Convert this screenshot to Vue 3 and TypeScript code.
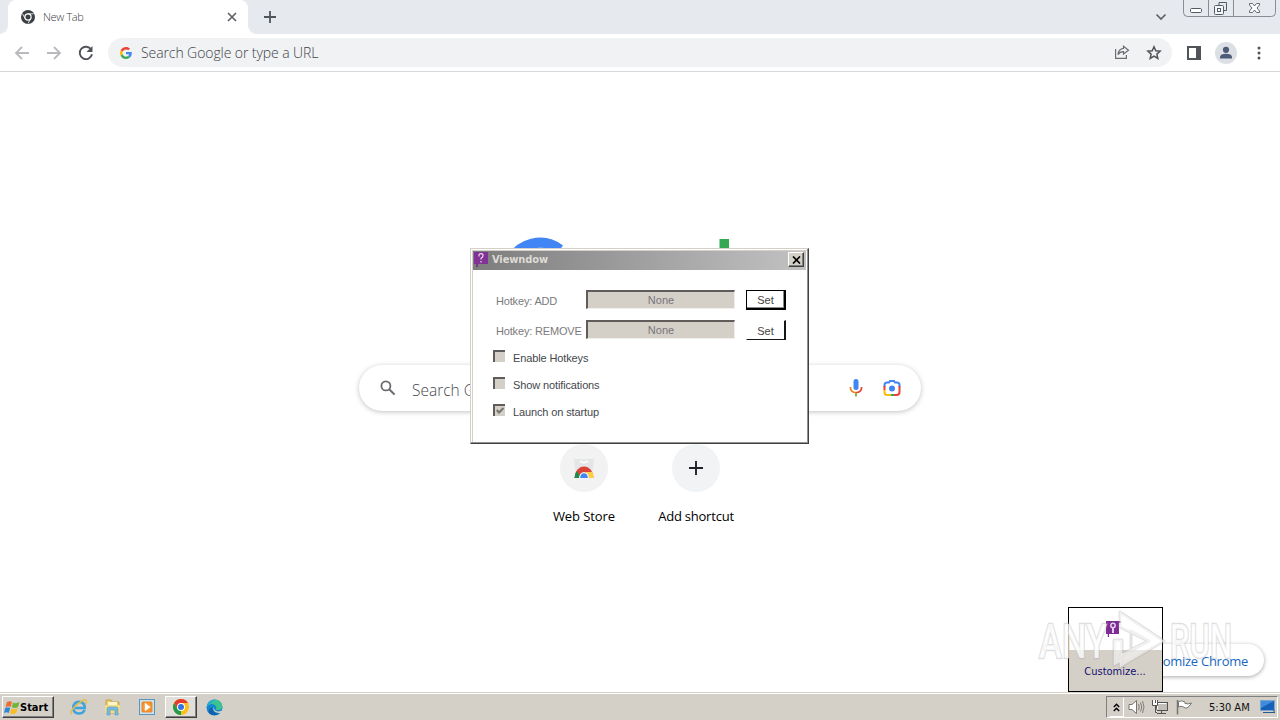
<script setup lang="ts">
interface HotkeyRow { label: string; value: string; focused: boolean }
interface Option { label: string; checked: boolean }

const hotkeys: HotkeyRow[] = [
  { label: 'Hotkey: ADD', value: 'None', focused: true },
  { label: 'Hotkey: REMOVE', value: 'None', focused: false },
]
const options: Option[] = [
  { label: 'Enable Hotkeys', checked: false },
  { label: 'Show notifications', checked: false },
  { label: 'Launch on startup', checked: true },
]
</script>

<template>
  <div class="desktop">
    <header class="tabstrip">
      <div class="tab">
        <svg class="tab-icon" width="14" height="14" viewBox="0 0 14 14">
          <circle cx="7" cy="7" r="7" fill="#3c4043" />
          <circle cx="7" cy="7" r="3.1" fill="#3c4043" stroke="#fff" stroke-width="1.2" />
          <path d="M7 3.8H12.600M4.2 8.6L1.400 3.700M9.8 8.6L7 13.400" stroke="#fff" stroke-width=".8" />
        </svg>
        <span class="tab-title">New Tab</span>
        <svg class="tab-close" width="10" height="10" viewBox="0 0 10 10"><path d="M1 1L9 9M9 1L1 9" stroke="#5f6368" stroke-width="1.7" /></svg>
      </div>
      <svg class="new-tab" width="12" height="12" viewBox="0 0 12 12"><path d="M6 0V12M0 6H12" stroke="#50555a" stroke-width="1.8" /></svg>
      <svg class="tab-search" width="12" height="8" viewBox="0 0 12 8"><path d="M1.5 1.5L6 6L10.5 1.5" fill="none" stroke="#5f6368" stroke-width="1.7" /></svg>
      <svg class="caption" width="94" height="18" viewBox="0 0 94 18">
        <path d="M.5 0V12.5Q.5 16.5 4.500 16.500H88.500Q92.500 16.500 92.500 12.500V0M25.500 0V16M50.500 0V16" fill="none" stroke="#888d94" />
        <rect x="7.500" y="8.500" width="11" height="4" rx="1.200" fill="#fff" stroke="#555b64" />
        <path d="M36 2.500H43.500V10.500H40.500" fill="none" stroke="#555b64" />
        <rect x="31.500" y="5.500" width="9" height="9" rx="1" fill="#f5f6f7" stroke="#555b64" />
        <rect x="34.500" y="8.500" width="3" height="3" fill="#fff" stroke="#555b64" />
        <path d="M36 5V2.500" stroke="#555b64" />
        <path d="M66.500 3.500H69.500L71.500 6L73.500 3.500H76.500V5L74 8L76.500 11V12.500H73.500L71.500 10L69.500 12.500H66.500V11L69 8L66.500 5Z" fill="#fff" stroke="#666b73" />
      </svg>
    </header>

    <nav class="toolbar">
      <svg width="16" height="14" viewBox="0 0 16 14" class="back"><path d="M15 7H2M8 1L2 7L8 13" fill="none" stroke="#b8babd" stroke-width="1.800" /></svg>
      <svg width="16" height="14" viewBox="0 0 16 14" class="forward"><path d="M1 7H14M8 1L14 7L8 13" fill="none" stroke="#b8babd" stroke-width="1.800" /></svg>
      <svg width="16" height="16" viewBox="0 0 16 16" class="reload"><path d="M13.200 4.600A6.200 6.200 0 1 0 14 9.300" fill="none" stroke="#505458" stroke-width="1.900" /><path d="M14.500 1V7H8.500Z" fill="#505458" /></svg>
      <div class="omnibox">
        <svg width="12" height="12" viewBox="0 0 48 48">
          <path fill="#EA4335" d="M24 9.500c3.500 0 6.700 1.200 9.200 3.600l6.900-6.900C35.900 2.400 30.500 0 24 0 14.600 0 6.500 5.400 2.600 13.200l8 6.200C12.400 13.700 17.700 9.500 24 9.500z" />
          <path fill="#4285F4" d="M47 24.500c0-1.600-.2-3.100-.4-4.500H24v9h12.900c-.6 3-2.200 5.500-4.800 7.200l7.700 6C44.400 38 47 31.800 47 24.500z" />
          <path fill="#FBBC05" d="M10.500 28.600c-1-2.900-1-6.200 0-9.200l-8-6.200c-3.400 6.800-3.400 14.800 0 21.600z" />
          <path fill="#34A853" d="M24 48c6.500 0 11.900-2.100 15.900-5.800l-7.700-6c-2.200 1.500-4.900 2.300-8.200 2.300-6.300 0-11.600-4.200-13.500-9.900l-8 6.200C6.500 42.600 14.600 48 24 48z" />
        </svg>
        <span class="omnibox-text">Search Google or type a URL</span>
        <svg class="share" width="16" height="15" viewBox="0 0 16 15" fill="none" stroke="#6b6f73" stroke-width="1.200"><path d="M1.600 4V13.400H12.400V10" /><path d="M9.500 1.200L14.500 5.200L9.500 9V6.700C7 6.700 5.300 7.500 4 9.600C4.300 6.200 6.200 3.800 9.500 3.400Z" /></svg>
        <svg class="star" width="16" height="15" viewBox="0 0 16 15"><path d="M8 1.800L9.800 5.800L14.100 6.200L10.900 9.100L11.800 13.400L8 11.100L4.200 13.400L5.100 9.100L1.900 6.200L6.200 5.800Z" fill="none" stroke="#505458" stroke-width="1.500" /></svg>
      </div>
      <svg class="panel-icon" width="14" height="14" viewBox="0 0 14 14"><path d="M0 0H14V14H0ZM2 2V12H9V2Z" fill="#505458" fill-rule="evenodd" /></svg>
      <svg class="avatar" width="22" height="22" viewBox="0 0 22 22"><circle cx="11" cy="11" r="11" fill="#dcdfe4" /><circle cx="11" cy="7.800" r="3.100" fill="#4d5a78" /><path d="M5 16.500V15Q5.500 11.800 11 11.800T17 15V16.500Z" fill="#4d5a78" /></svg>
      <svg class="more" width="4" height="14" viewBox="0 0 4 14" fill="#505458"><circle cx="2" cy="2" r="1.500" /><circle cx="2" cy="7" r="1.500" /><circle cx="2" cy="12" r="1.500" /></svg>
    </nav>

    <main class="page">
      <svg class="logo" width="272" height="92" viewBox="0 0 272 92">
        <path d="M56 13.500A33 33 0 1 0 69 40H36" fill="none" stroke="#4285f4" stroke-width="10" />
        <rect x="215.500" y="3" width="9.500" height="66" fill="#34a853" />
      </svg>
      <div class="searchbox">
        <svg width="16" height="16" viewBox="0 0 16 16"><circle cx="5.900" cy="5.900" r="4.500" fill="none" stroke="#66696d" stroke-width="1.800" /><path d="M9.200 9.200L14.600 14.600" stroke="#66696d" stroke-width="2" /></svg>
        <span class="search-text">Search Google or type a URL</span>
        <svg class="mic" width="14" height="18" viewBox="0 0 14 18"><rect x="4.500" y="0" width="5" height="11" rx="2.500" fill="#4285f4" /><path d="M1.300 8Q1.500 13.500 7 13.500" fill="none" stroke="#e58a1a" stroke-width="1.700" /><path d="M7 13.500Q12.500 13.500 12.700 8" fill="none" stroke="#ea4335" stroke-width="1.700" /><path d="M7 13.500V17.500" stroke="#8a9a38" stroke-width="1.700" /></svg>
        <svg width="18" height="18" viewBox="0 0 18 18" fill="none" stroke-width="2"><path d="M1.500 8V6Q1.500 3.500 4 3.500H6L7 2H11L12 3.500H14Q16.500 3.500 16.500 6V8" stroke="#4285f4" /><path d="M16.500 7V13Q16.500 16 13.500 16H11" stroke="#ea4335" /><path d="M11 16H7.500" stroke="#34a853" /><path d="M8 16H4Q1.500 16 1.500 13V11" stroke="#fbbc04" /><path d="M1.500 7V11" stroke="#ea4335" /><circle cx="9" cy="9.500" r="3" fill="#4285f4" /></svg>
      </div>
      <div class="shortcuts">
        <div class="shortcut">
          <div class="disc store">
            <svg width="24" height="24" viewBox="0 0 24 24"><path d="M2 3H22L20 21H4Z" fill="#e4e5e6" /><path d="M8 5Q12 8 16 5" fill="none" stroke="#fafafa" stroke-width="2" /><path d="M2.500 22A9.500 11.500 0 0 1 21.500 22Z" fill="#db4437" /><path d="M2.500 22Q2.500 18 5 15L9 22Z" fill="#168f4b" /><path d="M14 16H20.500Q22 19 21.500 22H14Z" fill="#ffcd40" /><path d="M7 22A5 6 0 0 1 17 22Z" fill="#f1f3f4" /><path d="M8.200 22A3.800 4.800 0 0 1 15.800 22Z" fill="#4285f4" /></svg>
          </div>
          <span class="web-label">Web Store</span>
        </div>
        <div class="shortcut">
          <div class="disc"><svg width="14" height="14" viewBox="0 0 14 14"><path d="M7 0V14M0 7H14" stroke="#202124" stroke-width="1.900" /></svg></div>
          <span class="add-label">Add shortcut</span>
        </div>
      </div>
      <button class="customize-chrome">Customize Chrome</button>
    </main>

    <section class="dialog">
      <div class="titlebar">
        <svg width="14" height="15" viewBox="0 0 14 15"><path d="M0 0H14V12H4V15H2V12H0Z" fill="#803295" /><path d="M5 4.500V3Q5 1.700 7 1.700T9 3.500T7 6.300V7.500M7 9V10.500" fill="none" stroke="#eadcf0" stroke-width="1.200" /></svg>
        <span class="window-title">Viewndow</span>
        <span class="close-button"><svg width="9" height="8" viewBox="0 0 9 8"><path d="M1 .5L8 7.500M8 .5L1 7.500" stroke="#000" stroke-width="1.700" /></svg></span>
      </div>
      <div class="dialog-body">
        <div v-for="row in hotkeys" :key="row.label" class="hotkey">
          <span class="hotkey-label">{{ row.label }}</span>
          <span class="hotkey-field">{{ row.value }}</span>
          <button class="set" :class="{ focused: row.focused }">Set</button>
        </div>
        <div class="options">
          <div v-for="option in options" :key="option.label" class="option">
            <span class="check"><svg v-if="option.checked" width="8" height="8" viewBox="0 0 8 8"><path d="M.7 3L3 5.500L7.500 1" fill="none" stroke="#77756f" stroke-width="2" /></svg></span>
            <span class="option-label">{{ option.label }}</span>
          </div>
        </div>
      </div>
    </section>

    <aside class="tray-popup">
      <div class="tray-icons"><svg width="15" height="17" viewBox="0 0 15 17"><path d="M0 1H15V3H13V14H3V17H1.800V14H0Z" fill="#7c2d94" /><circle cx="7" cy="5.500" r="2.200" fill="none" stroke="#e2cdea" stroke-width="1.500" /><path d="M7 8V13" stroke="#e2cdea" stroke-width="2" /></svg></div>
      <div class="tray-customize">Customize...</div>
    </aside>

    <svg class="watermark" width="204" height="66" viewBox="0 0 204 66">
      <g class="mark-text">
        <text x="4" y="51" textLength="68" lengthAdjust="spacingAndGlyphs">ANY</text>
        <text x="135" y="51" textLength="62" lengthAdjust="spacingAndGlyphs">RUN</text>
      </g>
      <g fill="none" stroke-linejoin="round">
        <path d="M79 33V58L87 54V33ZM85 5V20L113 34L85 48V60L129 34ZM96 24V44L114 34Z" stroke="#aaa" stroke-opacity=".35" stroke-width="3" />
        <path d="M79 33V58L87 54V33ZM85 5V20L113 34L85 48V60L129 34Z" fill="#fff" fill-opacity=".5" stroke="#fff" stroke-opacity=".35" />
      </g>
    </svg>

    <footer class="taskbar">
      <button class="start">
        <svg width="17" height="15" viewBox="0 0 17 15"><path d="M3 2Q6 .5 8 2L6.500 7Q4 5.500 1.500 7Z" fill="#ed6c2d" /><path d="M9 2.500Q12 4 15.500 2L14 7Q11 8.700 7.700 7.200Z" fill="#70b43b" /><path d="M1.200 8Q3.500 6.500 6.200 8L4.700 13Q2.500 11.500 0 13Z" fill="#2989d8" /><path d="M7.400 8.400Q10 10 13.700 8.200L12.200 13Q9 14.700 5.900 13.200Z" fill="#f7bd25" /></svg>
        <span>Start</span>
      </button>
      <svg class="ie" width="18" height="18" viewBox="0 0 18 18"><path d="M14.700 12Q13 15.500 9 15.500Q3.300 15.300 3.300 9.500Q3.500 4 9 3.700Q14.800 4 14.800 10H5" fill="none" stroke="#3fa4dd" stroke-width="2.500" /><path d="M2 16Q-1 14 6 7.500Q14 .5 16 2Q17.200 3 15.500 6" fill="none" stroke="#e8bd41" stroke-width="1.400" /></svg>
      <svg class="explorer" width="17" height="17" viewBox="0 0 17 17"><path d="M2 1H7L8 3H15V14H2Z" fill="#e9cc69" stroke="#c6a348" /><path d="M4 3H13V8H4Z" fill="#fff7c9" /><path d="M1 6H16V14H1Z" fill="#f3dc86" /><path d="M3 16V10Q3 8 5 8H12Q14 8 14 10V16H11V11H6V16Z" fill="#75b9df" stroke="#5b9ac1" stroke-width=".6" /></svg>
      <svg class="player" width="16" height="17" viewBox="0 0 16 17"><rect x=".5" y=".5" width="15" height="15" fill="#cae4f4" stroke="#5796bd" /><rect x="2.500" y="2.500" width="11" height="11" rx="1.500" fill="#f08a25" /><circle cx="8" cy="8" r="4.400" fill="#f59a38" /><path d="M5.800 3.800L11.500 8L5.800 12.200Z" fill="#fff" /></svg>
      <div class="task-active"><svg width="16" height="16" viewBox="0 0 16 16"><circle cx="8" cy="8" r="8" fill="#fbc116" /><path d="M1.070 4A8 8 0 0 1 14.930 4H8L4.500 10Z" fill="#e33b2e" /><path d="M1.070 4L4.540 10L8 11.500L8 16A8 8 0 0 1 1.070 4Z" fill="#219b4d" /><circle cx="8" cy="8" r="4" fill="#fff" /><circle cx="8" cy="8" r="3" fill="#3474e0" /></svg></div>
      <svg class="edge" width="17" height="17" viewBox="0 0 17 17"><circle cx="8.500" cy="8.500" r="8" fill="#1387d0" /><path d="M1 7Q3 .5 9 .5Q16 1 16.500 8Q16 11.500 11 11Q9 10.500 10.500 8.500Q9 4.500 5 5Q2 5.500 1 7Z" fill="#3dc38f" /><path d="M1 7Q3 .7 9 .6L5 5Q2 5.500 1 7Z" fill="#29afd2" /><path d="M6.500 8Q6 14 12.500 14.500Q8 18 3.500 14.500Q1 10.500 6.500 8Z" fill="#1260aa" /><path d="M7.500 8Q8 12 12 12.500Q15 12.300 17 11V13L15 15Q15 14 12.500 14Q6 13 7.500 8Z" fill="#d4d0c8" /></svg>
      <div class="systray">
        <span class="expand"><svg width="7" height="9" viewBox="0 0 7 9"><path d="M.8 4L3.500 1.300L6.200 4M.8 8L3.500 5.300L6.200 8" fill="none" stroke="#000" stroke-width="1.400" /></svg></span>
        <svg class="volume" width="17" height="16" viewBox="0 0 17 16"><path d="M1 5.500H4L8.500 1.500V14.500L4 10.500H1Z" fill="#fff" stroke="#77756f" /><path d="M10.500 5Q12 8 10.500 11M12.500 3.500Q15 8 12.500 12.500M14.500 2Q17.500 8 14.500 14" fill="none" stroke="#77756f" stroke-width=".9" /></svg>
        <svg class="network" width="17" height="16" viewBox="0 0 17 16"><rect x="4.500" y="3.500" width="11" height="8" fill="#c1beb7" stroke="#55534f" /><path d="M5.500 10.500V4.500H14.500" fill="none" stroke="#fff" /><path d="M5 14.500H14M9.500 12V14" stroke="#55534f" /><path d="M.5 1V6.500H5.500V1M3.500 6.500V13.500H5M3.500 1V4" fill="#fff" stroke="#55534f" /></svg>
        <svg class="flag" width="17" height="16" viewBox="0 0 17 16"><path d="M2.500 2.500Q6 1 9 3V4.500Q12 5.500 15.500 4Q13 8 11 9Q9 9.500 7.500 8Q5 6.500 2.500 8Z" fill="#fff" stroke="#77756f" /><path d="M1.500 1V15.500" stroke="#77756f" stroke-width="1.500" /></svg>
        <span class="clock">5:30 AM</span>
        <svg class="desktop-icon" width="16" height="14" viewBox="0 0 16 14"><rect x=".5" y=".5" width="14" height="10" fill="#1760b7" stroke="#7aa4d0" /><path d="M1 1H14L1 8Z" fill="#3f8bdc" /><path d="M3 12.500H15M14 10V13" stroke="#24588f" /></svg>
      </div>
    </footer>
  </div>
</template>

<style>
html, body { margin: 0; overflow: hidden; background: #fff; }
</style>

<style scoped>
* { box-sizing: border-box; }
svg { display: block; flex: none; }
span { white-space: nowrap; }
button { font: inherit; padding: 0; border-radius: 0; }
.desktop { position: relative; display: flex; flex-direction: column; width: 1280px; height: 720px; overflow: hidden; background: #fff; font-family: "Open Sans", "Noto Sans", sans-serif; }
.tabstrip { display: flex; align-items: center; height: 34px; padding-left: 8px; background: #e6e9ed; flex: none; }
.tab { position: relative; display: flex; align-items: center; width: 240px; height: 34px; padding: 0 11px 0 13px; background: #fff; border-radius: 8px 8px 0 0; }
.tab::before, .tab::after { content: ""; position: absolute; bottom: 0; width: 8px; height: 8px; }
.tab::before { left: -8px; background: radial-gradient(circle at 0 0, transparent 7.5px, #fff 8px); }
.tab::after { right: -8px; background: radial-gradient(circle at 100% 0, transparent 7.5px, #fff 8px); }
.tab-title { margin-left: 8px; padding-bottom: 2px; font-size: 11px; color: #3c4043; font-weight: 300; letter-spacing: -.35px; }
.tab-close { margin-left: auto; }
.new-tab { margin-left: 16px; }
.tab-search { margin-left: auto; }
.caption { align-self: flex-start; margin-left: 16px; margin-right: 3px; }
.toolbar { display: flex; align-items: center; height: 38px; border-bottom: 1px solid #d6d8db; padding: 0 19px 0 14px; flex: none; }
.forward { margin-left: 16px; }
.reload { margin-left: 16px; }
.omnibox { display: flex; align-items: center; width: 1064px; height: 29px; margin-left: 14px; padding: 0 10px 0 12px; border-radius: 15px; background: #f0f2f4; flex: none; }
.omnibox-text { margin-left: 9px; font-size: 14px; font-weight: 300; color: #3f4348; letter-spacing: -.09px; }
.share { margin-left: auto; }
.star { margin-left: 16px; }
.panel-icon { margin-left: 15px; }
.avatar { margin-left: 14px; }
.more { margin-left: 20px; }
.page { position: relative; display: flex; flex-direction: column; align-items: center; height: 620px; padding-top: 164px; flex: none; }
.searchbox { display: flex; align-items: center; width: 562px; height: 46px; margin-top: 37px; padding: 0 20px 0 21px; border-radius: 23px; background: #fff; box-shadow: 0 1px 5px rgb(32 33 36 / 28%); flex: none; }
.search-text { margin-left: 16px; padding-top: 3px; font-size: 15.5px; font-weight: 300; color: #45484c; }
.mic { margin-left: auto; margin-right: 20px; }
.shortcuts { display: flex; margin-top: 33px; }
.shortcut { display: flex; flex-direction: column; align-items: center; width: 112px; font-size: 13px; color: #000; }
.disc { display: flex; align-items: center; justify-content: center; width: 48px; height: 48px; border-radius: 50%; background: #f1f3f4; }
.store { background: #f2f2f2; }
.web-label, .add-label { margin-top: 15px; line-height: 18px; }
.add-label { letter-spacing: -.22px; }
.web-label { letter-spacing: -.08px; }
.customize-chrome { position: absolute; right: 16px; bottom: 16px; width: 158px; height: 32px; padding: 2px 16px 0 0; text-align: right; border: 0; border-radius: 16px; background: #fff; box-shadow: 0 1px 4px rgb(0 0 0 / 35%); color: #1967c2; font-size: 13px; letter-spacing: -.27px; }
.dialog { position: absolute; left: 470px; top: 248px; width: 339px; height: 196px; padding: 1px; border: 1px solid; border-color: #d4d0c8 #404040 #404040 #d4d0c8; background: #fff; box-shadow: inset -1px -1px #929292, inset 1px 1px #fff, inset 2px 2px #d4d0c8; font: 11px "Liberation Sans", Arial, sans-serif; }
.titlebar { display: flex; align-items: center; height: 19px; margin: 1px 1px 0; padding: 0 2px 2px 1px; background: linear-gradient(90deg, #7d7d7d, #c2c2c2); }
.window-title { margin-left: 4px; color: #dedbd4; font: bold 11px "DejaVu Sans Condensed", "DejaVu Sans", sans-serif; letter-spacing: -.1px; }
.close-button { display: flex; align-items: center; justify-content: center; width: 16px; height: 15px; margin-left: auto; border: 1px solid; border-color: #fff #404040 #404040 #fff; background: #d4d0c8; box-shadow: inset -1px -1px #808080; }
.dialog-body { padding: 20px 19px 0 21px; }
.hotkey { display: flex; align-items: center; height: 20px; margin-bottom: 10px; }
.hotkey-label { width: 93px; padding-left: 3px; padding-top: 2px; color: #7b7b7e; letter-spacing: -.17px; }
.hotkey-field { width: 149px; height: 19px; border: 1px solid #f0efed; border-top: 2px solid #5f5c59; border-left: 2px solid #5f5c59; background: #d4d0c8; color: #77757a; line-height: 17px; text-align: center; align-self: flex-start; }
.set { width: 40px; height: 20px; margin-left: 11px; padding-top: 1px; background: #fff; border: 1px solid #fff; border-right: 2px solid #161616; border-bottom: 1px solid #161616; color: #444; text-align: center; }
.set.focused { border: 1px solid #000; border-right-width: 2px; border-bottom-width: 2px; box-shadow: inset -1px -1px #888; }
.options { display: flex; flex-direction: column; margin-top: 3px; }
.option { display: flex; height: 27px; }
.check { width: 12px; height: 12px; padding: 1px; background: #d4d0c8; border-left: 2px solid #5f5c59; border-top: 2px solid #5f5c59; }
.option-label { margin-left: 8px; padding-top: 1px; line-height: 15px; color: #44474b; letter-spacing: -.12px; }
.tray-popup { position: absolute; left: 1068px; top: 607px; width: 95px; height: 85px; border: 1px solid #000; background: #d4d0c8; }
.tray-icons { display: flex; justify-content: center; height: 42px; padding-top: 12px; padding-right: 5px; background: #fff; }
.tray-customize { margin-top: 15px; padding-right: 1px; text-align: center; color: #17106e; font: 11px/14px "DejaVu Sans Condensed", "DejaVu Sans", sans-serif; }
.watermark { position: absolute; left: 1035px; top: 607px; pointer-events: none; }
.mark-text { font: 500 49px Roboto, sans-serif; fill: rgb(255 255 255 / 75%); stroke: rgb(175 175 175 / 42%); stroke-width: 2.5px; paint-order: stroke; }
.taskbar { display: flex; align-items: center; height: 28px; padding: 2px 2px 0; background: linear-gradient(#d4d0c8 1px, #fff 1px, #fff 2px, #d4d0c8 2px); flex: none; }
.start { display: flex; align-items: center; width: 52px; height: 22px; padding-left: 1px; border: 1px solid; border-color: #fff #404040 #404040 #fff; box-shadow: inset -1px -1px #808080; background: #d4d0c8; color: #000; font: bold 11px "DejaVu Sans Condensed", "DejaVu Sans", sans-serif; }
.start span { margin-left: -1px; }
.ie { margin-left: 16px; }
.explorer { margin-left: 16px; }
.player { margin-left: 18px; }
.task-active { display: flex; align-items: center; justify-content: center; width: 32px; height: 22px; margin-left: 10px; background: #e2dfda; border: 1px solid; border-color: #fff #404040 #404040 #fff; box-shadow: inset -1px -1px #808080; }
.edge { margin-left: 9px; }
.systray { display: flex; align-items: center; width: 172px; height: 22px; margin-left: auto; border: 1px solid; border-color: #808080 #fff #fff #808080; flex: none; }
.expand { display: flex; align-items: center; justify-content: center; width: 15px; height: 20px; margin-left: 2px; border: 1px solid; border-color: #d4d0c8 #fff #fff #d4d0c8; }
.volume { margin-left: 4px; }
.network { margin-left: 7px; }
.flag { margin-left: 7px; }
.clock { margin-left: 16px; font: 11px "DejaVu Sans Condensed", "DejaVu Sans", sans-serif; color: #111; }
.desktop-icon { margin-left: auto; margin-right: 1px; }
</style>
